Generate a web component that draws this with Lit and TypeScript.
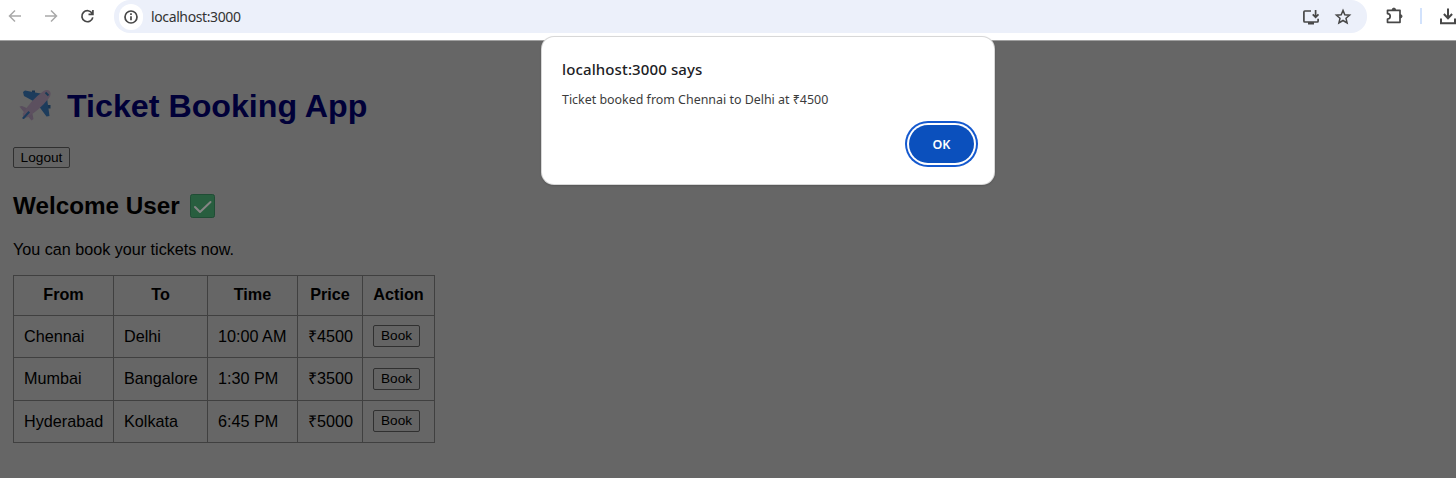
import { LitElement, html, css } from "lit";
import { customElement, property } from "lit/decorators.js";

interface Trip {
  from: string;
  to: string;
  time: string;
  price: number;
}

@customElement("browser-bar")
class BrowserBar extends LitElement {
  static styles = css`
    :host { display: block; }
    .bar {
      height: 41px; box-sizing: border-box; background: #fff;
      border-bottom: 1px solid #a0a0a0; display: flex; align-items: flex-start;
      padding-left: 6px; overflow: hidden;
    }
    svg { display: block; flex: none; fill: none; stroke: #474747; stroke-width: 1.7; }
    .nav { display: flex; gap: 18px; padding-top: 7px; width: 108px; flex: none; }
    .nav .off { stroke: #a9a9a9; stroke-width: 1.5; }
    .address {
      width: 1253px; flex: none; height: 33px; background: #ecf0fa;
      border-radius: 16px; display: flex; align-items: center;
      box-sizing: border-box; padding: 0 14px 0 5px;
    }
    .info {
      width: 24px; height: 26px; border-radius: 13px; background: #fff;
      display: flex; align-items: center; justify-content: center;
    }
    .url {
      font: 14px/20px "Noto Sans", sans-serif; color: #333; margin-left: 8px; flex: 1;
      letter-spacing: -0.38px;
    }
    .marks { display: flex; gap: 12px; }
    .ext { padding: 6px 0 0 17px; }
    .sep { width: 2px; height: 16px; margin: 8px 16px 0 16px; background: #d2e2fc; flex: none; }
    .dl { padding-top: 6px; }
  `;

  render() {
    return html`
      <div class="bar">
        <div class="nav">
          <svg class="off" width="18" height="18" viewBox="0 0 18 18"><path d="M15 9H3.5M9 3.5 3.5 9 9 14.5" /></svg>
          <svg class="off" width="18" height="18" viewBox="0 0 18 18"><path d="M3 9h11.5M9 3.5 14.500 9 9 14.500" /></svg>
          <svg width="18" height="18" viewBox="0 0 18 18"><path d="M14.200 6.500A5.500 5.500 0 1 0 14.800 10.300M14.900 3v4.400H10.500" /></svg>
        </div>
        <div class="address">
          <div class="info">
            <svg width="16" height="16" viewBox="0 0 16 16"><circle cx="8" cy="8" r="6" /><path d="M8 7.300v4M8 4.300v1.700" /></svg>
          </div>
          <span class="url">localhost:3000</span>
          <div class="marks">
            <svg width="20" height="20" viewBox="0 0 20 20">
              <path d="M10 4H3.800Q2.900 4 2.900 5v9q0 1 .9 1h12.400q.9 0 .9-1v-2.300M14.600 3v7M11.700 7.300l2.900 2.900 2.900-2.900" />
              <path d="M7 16.300h6" stroke-width="2.400" />
            </svg>
            <svg width="20" height="20" viewBox="0 0 20 20"><path stroke-width="1.500" d="m10 3.400 1.800 4.400 4.800.4-3.600 3.100 1.100 4.700-4.100-2.500-4.100 2.500L7 11.300 3.400 8.200l4.800-.4z" /></svg>
          </div>
        </div>
        <svg class="ext" width="20" height="20" viewBox="0 0 20 20">
          <path d="M3.500 4.300h12.500v12h-12.500v-3.300a2.500 2.500 0 0 0 0-5.400z" stroke-linejoin="round" />
          <path d="M8.200 3.800a1.700 1.700 0 0 1 3.400 0zM16.300 8.600a1.700 1.700 0 0 1 0 3.400z" fill="#474747" stroke-width="1" />
        </svg>
        <div class="sep"></div>
        <svg class="dl" width="20" height="20" viewBox="0 0 20 20"><path stroke-width="2" d="M10 2.500v9.500M5.900 8 10 12.200 14.100 8M3 12.500v4.700h14v-4.700" /></svg>
      </div>
    `;
  }
}

@customElement("trip-table")
class TripTable extends LitElement {
  @property({ attribute: false }) trips: Trip[] = [];

  static styles = css`
    :host { display: block; }
    table { border-collapse: collapse; table-layout: fixed; width: 422px; font: 16.200px/18px "Liberation Sans", Arial, sans-serif; color: #000; }
    th, td { border: 1px solid #404040; box-sizing: border-box; padding: 0 0 1px 10px; text-align: left; white-space: nowrap; height: 42px; }
    th { text-align: center; padding: 0 0 3px; height: 40px; }
    tr.tall td { height: 43px; padding-bottom: 2px; }
    tr.tall td:last-child { padding-bottom: 1px; }
    .c1 { width: 100px; } .c2 { width: 94px; } .c3 { width: 90px; } .c4 { width: 65px; } .c5 { width: 72px; }
    button {
      display: block; box-sizing: border-box; width: 47px; height: 22px; padding: 0; border: 1px solid #303030;
      border-radius: 2px; background: #646464; color: #000; font: 13.600px/20px "Liberation Sans", Arial, sans-serif;
    }
  `;

  render() {
    return html`
      <table>
        <colgroup><col class="c1" /><col class="c2" /><col class="c3" /><col class="c4" /><col class="c5" /></colgroup>
        <thead><tr><th>From</th><th>To</th><th>Time</th><th>Price</th><th>Action</th></tr></thead>
        <tbody>
          ${this.trips.map((t, i) => html`
            <tr class=${i === 1 ? "tall" : ""}>
              <td>${t.from}</td><td>${t.to}</td><td>${t.time}</td><td>₹${t.price}</td>
              <td><button>Book</button></td>
            </tr>
          `)}
        </tbody>
      </table>
    `;
  }
}

@customElement("alert-dialog")
class AlertDialog extends LitElement {
  static styles = css`
    :host { display: block; }
    .box {
      width: 452px; height: 147px; box-sizing: border-box; background: #fff; border-radius: 12px;
      padding: 20px 20px 18px 20px; font-family: "Noto Sans", sans-serif; color: #202124;
      box-shadow: 0 0 0 1px #d8d8d8, 0 1px 2px 1px rgba(0, 0, 0, .15);
      display: flex; flex-direction: column;
    }
    .title { font-size: 15px; line-height: 24px; font-weight: 500; white-space: nowrap; letter-spacing: .12px; }
    .message { font-size: 12.430px; line-height: 18px; margin-top: 10px; color: #3c3c3c; white-space: nowrap; }
    button {
      align-self: flex-end; margin-top: 16px; width: 65px; height: 38px; flex: none; padding: 2px 0 0; border: 0; border-radius: 19px;
      background: #0b50bd; color: #fff; font: 600 12.500px/18px "Noto Sans", sans-serif;
      box-shadow: 0 0 0 2px #fff, 0 0 0 4px #1459cf;
    }
  `;

  render() {
    return html`
      <div class="box">
        <div class="title">localhost:3000 says</div>
        <div class="message">Ticket booked from Chennai to Delhi at ₹4500</div>
        <button>OK</button>
      </div>
    `;
  }
}

@customElement("app-root")
class AppRoot extends LitElement {
  private trips: Trip[] = [
    { from: "Chennai", to: "Delhi", time: "10:00 AM", price: 4500 },
    { from: "Mumbai", to: "Bangalore", time: "1:30 PM", price: 3500 },
    { from: "Hyderabad", to: "Kolkata", time: "6:45 PM", price: 5000 },
  ];

  static styles = css`
    :host { display: block; position: relative; width: 1456px; height: 478px; overflow: hidden; background: #666; }
    main { padding: 44px 0 0 13px; font-family: "Liberation Sans", Arial, sans-serif; color: #000; }
    h1 { margin: 0; height: 42px; display: flex; align-items: center; font-size: 32.200px; line-height: 42px; color: #000038; white-space: nowrap; }
    h2 { margin: 22px 0 0; height: 32px; display: flex; align-items: center; font-size: 24.250px; line-height: 32px; white-space: nowrap; }
    svg { display: block; flex: none; }
    .plane { margin: 0 14px 0 5px; }
    .check { margin: 0 0 1px 10px; }
    .logout {
      display: block; box-sizing: border-box; width: 57px; height: 21px; margin-top: 20px; padding: 0; border: 1px solid #303030;
      border-radius: 2px; background: #646464; color: #000; font: 13.700px/19px "Liberation Sans", Arial, sans-serif;
    }
    p { margin: 17px 0 16px; font-size: 16.150px; line-height: 20px; white-space: nowrap; }
    .dialog { position: absolute; left: 542px; top: 37px; }
  `;

  render() {
    return html`
      <browser-bar></browser-bar>
      <main>
        <h1>
          <svg class="plane" width="35" height="34" viewBox="0 0 35 34">
            <path fill="#193450" d="M14 1.500h3v4h-3zM29 16h3.500v3.500H29z" />
            <path fill="#1d3c5c" d="M5 3 7 1.500l18 3.500-7 8.500L6 7zM29 9l2.500 18-3 .500L20 16z" />
            <path fill="#594d5d" d="M1.500 17.500 4 17l8 3.500-5 4zM9 26l5-3 1.500 7-2 1.500z" />
            <path fill="#5c505f" d="M5 24.500Q13 11 25 2.500q4-2.500 6.500-.500 2.500 2.500-.500 7Q22 20.500 9 28.500q-5 1-4-4z" />
            <path fill="#1d3c5c" d="m4.500 28.500 6-6.500 1.500 1.500-6 6.500q-2 .500-1.500-1.500z" />
            <path stroke="#193a55" stroke-width="1.800" d="m27.500 3.500 3 3" />
          </svg>
          <span>Ticket Booking App</span>
        </h1>
        <button class="logout">Logout</button>
        <h2>
          <span>Welcome User</span>
          <svg class="check" width="25" height="24" viewBox="0 0 25 24">
            <rect x=".500" y=".500" width="24" height="23" rx="2" fill="#285e3f" stroke="#204d35" />
            <path fill="none" stroke="#858585" stroke-width="2" stroke-linecap="round" stroke-linejoin="round" d="m5 13 5 5L20.500 8" />
          </svg>
        </h2>
        <p>You can book your tickets now.</p>
        <trip-table .trips=${this.trips}></trip-table>
      </main>
      <alert-dialog class="dialog"></alert-dialog>
    `;
  }
}
